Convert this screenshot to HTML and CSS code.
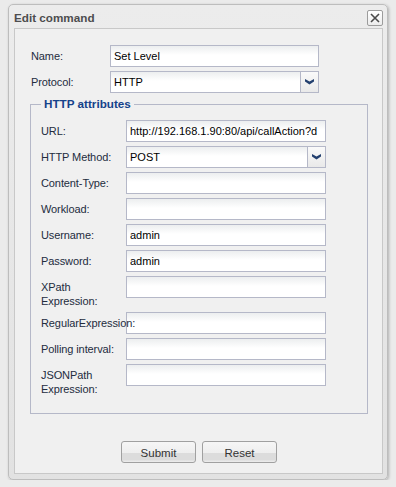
FILE: index.html
```html
<!DOCTYPE html>
<html lang="en">
<head>
    <meta charset="UTF-8">
    <title>Edit command</title>
    <link rel="stylesheet" href="styles.css">
</head>
<body>
    <!-- Edit command window -->
    <div class="window">
        <div class="window-header">
            <span class="window-title">Edit command</span>
            <span class="close-btn">
                <svg width="10" height="10" viewBox="0 0 10 10">
                    <path d="M1 1 L9 9 M9 1 L1 9" stroke="#4a4a4a" stroke-width="1.6" fill="none"/>
                </svg>
            </span>
        </div>
        <div class="window-body">
            <form class="command-form">
                <div class="form-row">
                    <label class="field-label">Name:</label>
                    <input class="text-field" type="text" value="Set Level">
                </div>
                <div class="form-row">
                    <label class="field-label">Protocol:</label>
                    <div class="combo">
                        <span class="combo-value">HTTP</span>
                        <span class="combo-trigger">
                            <svg width="9" height="6" viewBox="0 0 9 6"><path d="M0 0 L4.5 2.6 L9 0 L9 2.4 L4.5 5.5 L0 2.4 Z" fill="#23406f"/></svg>
                        </span>
                    </div>
                </div>

                <fieldset class="attributes">
                    <legend>HTTP attributes</legend>
                    <div class="form-row">
                        <label class="field-label">URL:</label>
                        <input class="text-field" type="text" value="http://192.168.1.90:80/api/callAction?d">
                    </div>
                    <div class="form-row">
                        <label class="field-label">HTTP Method:</label>
                        <div class="combo">
                            <span class="combo-value">POST</span>
                            <span class="combo-trigger">
                                <svg width="9" height="6" viewBox="0 0 9 6"><path d="M0 0 L4.5 2.6 L9 0 L9 2.4 L4.5 5.5 L0 2.4 Z" fill="#23406f"/></svg>
                            </span>
                        </div>
                    </div>
                    <div class="form-row">
                        <label class="field-label">Content-Type:</label>
                        <input class="text-field" type="text">
                    </div>
                    <div class="form-row">
                        <label class="field-label">Workload:</label>
                        <input class="text-field" type="text">
                    </div>
                    <div class="form-row">
                        <label class="field-label">Username:</label>
                        <input class="text-field" type="text" value="admin">
                    </div>
                    <div class="form-row">
                        <label class="field-label">Password:</label>
                        <input class="text-field" type="text" value="admin">
                    </div>
                    <div class="form-row">
                        <label class="field-label">XPath Expression:</label>
                        <input class="text-field" type="text">
                    </div>
                    <div class="form-row">
                        <label class="field-label wide">RegularExpression:</label>
                        <input class="text-field" type="text">
                    </div>
                    <div class="form-row">
                        <label class="field-label">Polling interval:</label>
                        <input class="text-field" type="text">
                    </div>
                    <div class="form-row">
                        <label class="field-label">JSONPath Expression:</label>
                        <input class="text-field" type="text">
                    </div>
                </fieldset>

                <div class="buttons">
                    <button type="button">Submit</button>
                    <button type="button">Reset</button>
                </div>
            </form>
        </div>
    </div>
</body>
</html>
```

FILE: styles.css
```css
body {
    margin: 0;
    padding: 4px 0 0 8px;
    background-color: #ebebeb;
    font-family: Tahoma, "DejaVu Sans Condensed", "Liberation Sans", sans-serif;
}
.window {
    width: 380px;
    height: 476px;
    box-sizing: border-box;
    border: 1px solid #bdbdbd;
    border-radius: 5px;
    background: linear-gradient(#ececec, #e2e2e2);
    box-shadow: 1px 1px 3px rgba(0, 0, 0, 0.25);
    display: flex;
    flex-direction: column;
}
.window-header {
    height: 23px;
    display: flex;
    align-items: center;
    justify-content: space-between;
    padding: 0 4px 0 5px;
}
.window-title {
    font-family: "Liberation Sans", sans-serif;
    font-weight: bold;
    font-size: 11.7px;
    color: #4d4d4f;
    padding-top: 1px;
}
.close-btn {
    width: 14px;
    height: 14px;
    border: 1px solid #9c9c9c;
    border-radius: 2px;
    background: linear-gradient(#ffffff, #ececec);
    display: flex;
    align-items: center;
    justify-content: center;
    margin-top: 3px;
}
.window-body {
    flex: 1;
    margin: 0 4px 5px 5px;
    border: 1px solid #c8c8c8;
    background-color: #f0f0f0;
}
.command-form {
    padding-top: 16px;
}
.form-row {
    display: flex;
    align-items: flex-start;
    margin-bottom: 4px;
}
.command-form > .form-row {
    padding-left: 16px;
}
.field-label {
    font-family: "Liberation Sans", sans-serif;
    font-size: 11px;
    letter-spacing: -0.1px;
    color: #232c3e;
    line-height: 14px;
    padding: 4px 0 0;
    flex: none;
    width: 79px;
}
.attributes .field-label {
    width: 85px;
}
.field-label.wide {
    white-space: nowrap;
    position: relative;
    z-index: 1;
}
.text-field, .combo {
    box-sizing: border-box;
    width: 209px;
    height: 22px;
    border: 1px solid #b5b8c8;
    background: linear-gradient(#eceeef, #ffffff 45%);
    font-family: "Liberation Sans", sans-serif;
    font-size: 11px;
    color: #000;
    padding: 0 3px;
    margin: 0;
    outline: none;
}
.attributes .text-field, .attributes .combo {
    width: 200px;
}
.combo {
    display: flex;
    align-items: center;
    padding-right: 0;
}
.combo-value {
    flex: 1;
}
.combo-trigger {
    width: 17px;
    height: 20px;
    border-left: 1px solid #b5b8c8;
    background: linear-gradient(#fafafa, #e9e9e9);
    display: flex;
    align-items: center;
    justify-content: center;
}
.attributes {
    margin: 4px 14px 0 15px;
    padding: 9px 10px 13px;
    border: 1px solid #b5b8c8;
}
.attributes legend {
    padding: 0 3px;
    font-family: "Liberation Sans", sans-serif;
    font-weight: bold;
    font-size: 11.7px;
    color: #15428b;
    line-height: 14px;
}
.buttons {
    display: flex;
    justify-content: center;
    gap: 6px;
    margin-top: 27px;
    padding-left: 1px;
}
.buttons button {
    width: 75px;
    height: 22px;
    border: 1px solid #a0a0a0;
    border-radius: 3px;
    background: linear-gradient(#f6f6f6, #eeeeee 55%, #dcdcdc 56%, #dcdcdc 88%, #eeeeee);
    font-family: "Liberation Sans", sans-serif;
    font-size: 11.5px;
    color: #333;
    padding: 1px 0 0;
}
```
